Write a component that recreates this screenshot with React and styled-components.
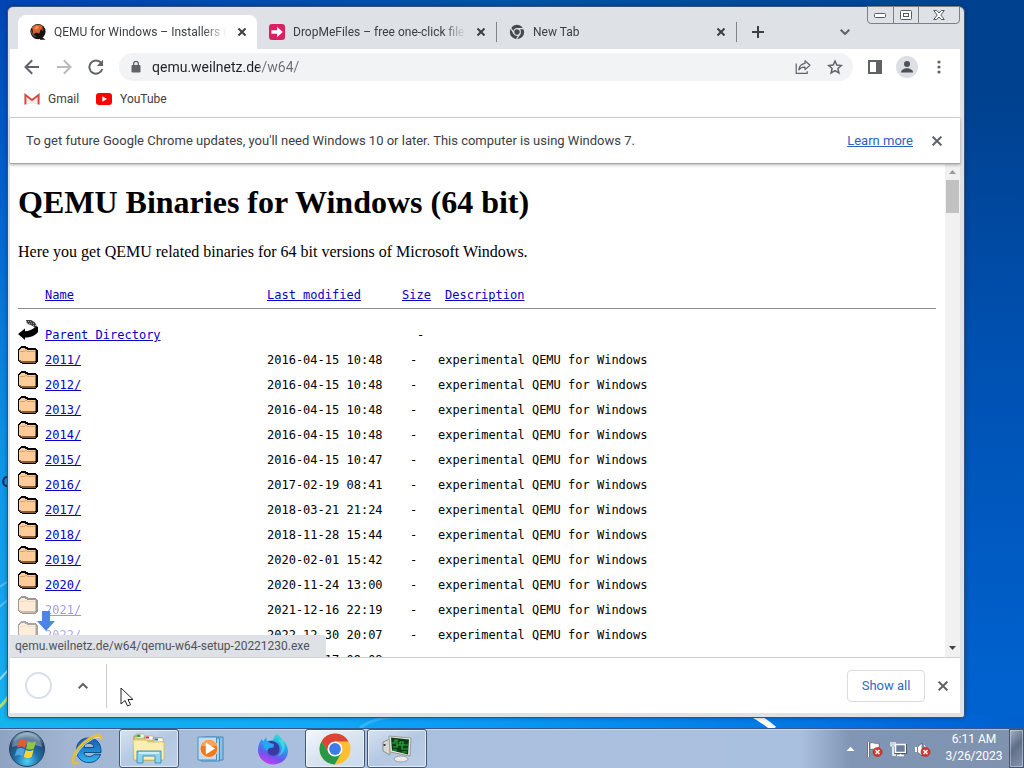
import React from 'react'
import styled, { createGlobalStyle } from 'styled-components'

const uiFont = 'Roboto, "Open Sans", sans-serif'
const monoFont = '"DejaVu Sans Mono", "Liberation Mono", monospace'
const serifFont = '"Liberation Serif", "Times New Roman", serif'
const iconColor = '#5f6368'
const textColor = '#3c4043'
const linkColor = '#0a00c4'

const GlobalStyle = createGlobalStyle`
    * { box-sizing: border-box; }
    body { margin: 0; overflow: hidden; font-family: ${uiFont}; font-size: 12px; color: ${textColor}; }
    button { font: inherit; color: inherit; border: 0; padding: 0; background: none; }
    svg { display: block; flex: none; }
`

const Desktop = styled.div`
    position: relative;
    display: flex;
    flex-direction: column;
    height: 100vh;
    background:
        linear-gradient(90deg, #14b4ee 0%, #10aaf8 30%, #058cf0 60%, #0168dc 90%, #0060cc 100%) bottom / 100% 54px no-repeat,
        linear-gradient(180deg, #00418f 0%, #00418f 12%, #0050b0 45%, #0062cf 90%) right / 64px 100% no-repeat,
        linear-gradient(90deg, #0145b4 0%, #0354a6 50%, #00418f 100%) top / 100% 10px no-repeat,
        linear-gradient(180deg, #0145b4 0%, #0060d0 25%, #0c96e8 60%, #18b8f0 100%);
`

const Wallpaper = styled.svg`
    position: absolute;
    left: 0;
    bottom: 40px;
`

const Window = styled.section`
    position: relative;
    flex: 1;
    min-height: 0;
    display: flex;
    flex-direction: column;
    margin: 6px 59px 10px 7px;
    padding: 0 4px 4px 2px;
    border: 1px solid #3b5274;
    border-radius: 6px 6px 3px 3px;
    background: #dee1e6;
    box-shadow: 0 0 4px rgba(0, 20, 60, 0.4);
`

const TabStrip = styled.header`
    position: relative;
    display: flex;
    align-items: flex-end;
    height: 42px;
    padding-left: 8px;
`

const Tab = styled.div`
    display: flex;
    align-items: center;
    width: 239px;
    height: 34px;
    padding: 0 7px 0 12px;
    border-radius: 8px 8px 0 0;
    background: ${p => (p.$active ? '#fff' : 'transparent')};
`

const TabTitle = styled.span`
    flex: 1;
    min-width: 0;
    margin: 0 7px 0 8px;
    overflow: hidden;
    white-space: nowrap;
    mask-image: linear-gradient(90deg, #000 calc(100% - 24px), transparent);
`

const TabDivider = styled.i`
    width: 1px;
    height: 20px;
    margin-bottom: 7px;
    background: #808388;
`

const IconButton = styled.button`
    display: flex;
    align-items: center;
    justify-content: center;
    flex: none;
    width: ${p => p.$size || 32}px;
    height: ${p => p.$size || 32}px;
    color: ${p => p.$color || iconColor};
`

const TabSearch = styled(IconButton)`
    margin: 0 99px 1px auto;
`

const NewTab = styled(IconButton)`
    margin: 0 0 1px 5px;
`

const WindowButtons = styled.div`
    position: absolute;
    top: -1px;
    right: 0;
    display: flex;
    border: 1px solid #7b7f88;
    border-radius: 0 0 4px 4px;
`

const WindowButton = styled.button`
    display: flex;
    align-items: center;
    justify-content: center;
    width: ${p => (p.$wide ? 41 : 25)}px;
    height: 16px;
    & + & { border-left: 1px solid #7b7f88; }
`

const Toolbar = styled.nav`
    display: flex;
    align-items: center;
    height: 36px;
    padding: 0 5px 0 6px;
    background: #fff;
`

const Omnibox = styled.form`
    flex: 1;
    display: flex;
    align-items: center;
    height: 28px;
    margin: 0 6px 0 7px;
    padding: 0 2px 0 11px;
    border-radius: 14px;
    background: #f1f3f4;
`

/* host part is darker than the path */
const Address = styled.input`
    flex: 1;
    min-width: 0;
    margin-left: 10px;
    padding: 0;
    border: 0;
    outline: 0;
    font: 14px ${uiFont};
    line-height: 20px;
    color: #202124;
    background: linear-gradient(90deg, #202124 107px, #6a6e73 107px);
    background-clip: text;
    -webkit-text-fill-color: transparent;
`

const Avatar = styled.span`
    display: flex;
    align-items: center;
    justify-content: center;
    width: 22px;
    height: 22px;
    border-radius: 50%;
    background: #dcdfe4;
`

const Bookmarks = styled.div`
    display: flex;
    align-items: center;
    gap: 17px;
    height: 33px;
    padding: 0 14px 5px;
    border-bottom: 1px solid #d5d7da;
    background: #fff;
`

const Bookmark = styled.a`
    display: flex;
    align-items: center;
    gap: 8px;
    color: inherit;
    text-decoration: none;
`

const InfoBar = styled.div`
    position: relative;
    z-index: 1;
    display: flex;
    align-items: center;
    height: 46px;
    padding: 0 11px 0 16px;
    border-bottom: 1px solid #a6a6a6;
    background: #fff;
    box-shadow: 0 1px 3px rgba(0, 0, 0, 0.3);
    font-size: 13px;
`

const InfoText = styled.p`
    flex: 1;
    margin: 0;
`

const InfoLink = styled.a`
    margin-right: 12px;
    color: #2b62c4;
`

const Viewport = styled.div`
    position: relative;
    flex: 1;
    min-height: 0;
    display: flex;
    overflow: hidden;
    background: #fff;
`

const Page = styled.main`
    flex: 1;
    padding: 20px 9px 0 8px;
    color: #000;
    font: 16px ${serifFont};
`

const Heading = styled.h1`
    margin: 0 0 22px;
    font-size: 32px;
    line-height: 37px;
`

const Intro = styled.p`
    margin: 0 0 16px;
    line-height: 18px;
`

const Listing = styled.table`
    width: 100%;
    table-layout: fixed;
    border-spacing: 0;
    font: 12px ${monoFont};
    line-height: 16px;
    white-space: pre;
    tbody::before { content: ''; display: block; height: 10px; }
    a { color: ${linkColor}; }
`

const HeadCell = styled.th`
    width: ${p => (p.$width ? p.$width + 'px' : 'auto')};
    padding: 10px 0 5px ${p => p.$indent || 0}px;
    border-bottom: 1px solid #8c8c8c;
    font-weight: 400;
    text-align: left;
`

const Cell = styled.td`
    padding: 8px 0 1px ${p => p.$indent || 0}px;
    opacity: ${p => p.$opacity || 1};
`

const IconCell = styled.td`
    padding: 1px 0 4px;
    opacity: ${p => p.$opacity || 1};
`

const ScrollTrack = styled.div`
    display: flex;
    flex-direction: column;
    justify-content: space-between;
    align-items: center;
    width: 15px;
    background: #f1f1f1;
`

const ScrollTop = styled.div`
    display: flex;
    flex-direction: column;
    align-items: center;
`

const ScrollThumb = styled.div`
    width: 13px;
    height: 33px;
    background: #c1c1c1;
`

const StatusBubble = styled.div`
    position: absolute;
    left: 0;
    bottom: 0;
    width: 316px;
    height: 22px;
    padding-left: 5px;
    border-top-right-radius: 3px;
    line-height: 22px;
    background: #dee1e6;
    color: #50545a;
`

const DownloadArrow = styled.svg`
    position: absolute;
    left: 27px;
    bottom: 26px;
`

const Shelf = styled.footer`
    display: flex;
    align-items: center;
    height: 56px;
    padding-right: 1px;
    border-top: 1px solid #cfd1d4;
    background: #fff;
`

const Progress = styled.div`
    width: 27px;
    height: 27px;
    margin: 0 15px;
    border: 2px solid #d8dfe8;
    border-radius: 50%;
`

const ShelfDivider = styled.i`
    width: 1px;
    height: 44px;
    margin: 0 auto 0 7px;
    background: #c9cbcf;
`

const ShowAll = styled.button`
    width: 78px;
    height: 32px;
    margin-right: 2px;
    border: 1px solid #dadce0;
    border-radius: 4px;
    font-size: 13px;
    color: #3367c8;
`

const Cursor = styled.svg`
    position: absolute;
    left: 112px;
    bottom: 9px;
`

const Taskbar = styled.footer`
    position: relative;
    display: flex;
    gap: 2px;
    height: 40px;
    border-top: 1px solid #35598a;
    background: linear-gradient(90deg, #8ea3c2 0, #a2b6d3 70px, #a9bfdd 260px, #a9c0de 800px, #8196b4 850px, #7f93b0 100%);
    box-shadow: inset 0 1px 0 rgba(255, 255, 255, 0.4);
`

const StartButton = styled.button`
    display: flex;
    align-items: center;
    width: 55px;
    padding-left: 8px;
`

const TaskButton = styled.button`
    display: flex;
    align-items: center;
    justify-content: center;
    width: 60px;
    height: 39px;
    border: 1px solid ${p => (p.$open ? '#3f5878' : 'transparent')};
    border-radius: 3px;
    background: ${p => {
        if (p.$active) return 'linear-gradient(150deg, #f2f7fb, #d4e0ee 60%, #cbdcf0)'
        return p.$open ? 'linear-gradient(150deg, #d6e2f1, #b4c8e2 50%, #bccfe8)' : 'none'
    }};
    box-shadow: ${p => (p.$open ? 'inset 0 0 0 1px rgba(255, 255, 255, 0.6)' : 'none')};
`

const Tray = styled.div`
    display: flex;
    align-items: center;
    margin-left: auto;
`

const TrayIcons = styled.div`
    display: flex;
    align-items: center;
    gap: 7px;
    padding: 2px 8px 0 11px;
`

const Clock = styled.time`
    width: 70px;
    padding-bottom: 1px;
    color: #fff;
    line-height: 17px;
    text-align: center;
`

const ShowDesktop = styled.button`
    align-self: stretch;
    width: 15px;
    border: 1px solid #46566e;
    background: linear-gradient(135deg, #a4b0c2, #5f6f88 45%, #8796ac);
    box-shadow: inset 0 0 0 1px rgba(255, 255, 255, 0.35);
`

const CloseIcon = ({ size = 8, width = 2 }) => (
    <svg width={size} height={size} viewBox="0 0 8 8" stroke="currentColor" strokeWidth={width * 8 / size}>
        <path d="M.5 .5 7.5 7.5M7.5 .5 .5 7.5" />
    </svg>
)

const ChevronIcon = ({ up }) => (
    <svg width="10" height="6" viewBox="0 0 10 6" fill="none" stroke="currentColor" strokeWidth="2">
        <path d={up ? 'M.7 5.3 5 1l4.3 4.3' : 'M.7 .7 5 5 9.3 .7'} />
    </svg>
)

const QemuIcon = () => (
    <svg width="16" height="16" viewBox="0 0 16 16">
        <circle cx="8" cy="7.6" r="7.6" fill="#17120f" />
        <path d="M10 11.5l5.5 4.3H10z" fill="#17120f" />
        <path d="M2 3.5C4 .8 8.5-.2 12 1.8l1 3.4-2.5.5-1.2 3.8-3-1-2.8 1.8z" fill="#d8622c" />
        <path d="M4 4l3-2.5L9 3 7 6z" fill="#f19152" />
        <path d="M1 6l3 5 3 2-3-.5C2 11 .6 9 1 6z" fill="#6b5c54" />
        <path d="M12 3l2 3-2 1z" fill="#7a3c20" />
    </svg>
)

const DropIcon = () => (
    <svg width="16" height="16" viewBox="0 0 16 16">
        <rect width="16" height="16" rx="3" fill="#db1f63" />
        <path d="M8 2.8 13.8 8 8 13.2V9.8H2.4V6.2H8z" fill="#fff" />
    </svg>
)

const ChromeMonoIcon = () => (
    <svg width="16" height="16" viewBox="0 0 16 16">
        <circle cx="8" cy="8" r="7.2" fill="#454a50" />
        <circle cx="8" cy="8" r="3.3" fill="none" stroke="#dee1e6" strokeWidth="1.2" />
        <path d="M8 4.7h6.8M5.1 9.6 1.7 3.9M10.9 9.6 7.4 15.5" stroke="#dee1e6" strokeWidth="1.2" />
        <circle cx="8" cy="8" r="2.1" fill="#454a50" />
    </svg>
)

const BackIcon = () => (
    <svg width="16" height="16" viewBox="0 0 16 16" fill="none" stroke="currentColor" strokeWidth="2">
        <path d="M15 8H2M8.2 1.3 1.5 8l6.7 6.7" />
    </svg>
)

const ForwardIcon = () => (
    <svg width="16" height="16" viewBox="0 0 16 16" fill="none" stroke="currentColor" strokeWidth="2">
        <path d="M1 8h13M7.8 1.3 14.5 8l-6.7 6.7" />
    </svg>
)

const ReloadIcon = () => (
    <svg width="16" height="16" viewBox="0 0 16 16">
        <path d="M13.1 3.9A6.6 6.6 0 1 0 14.3 10" fill="none" stroke="currentColor" strokeWidth="2" />
        <path d="M15 .8V7H8.8z" fill="currentColor" />
    </svg>
)

const LockIcon = () => (
    <svg width="12" height="14" viewBox="0 0 12 14">
        <rect x="1.5" y="5" width="9" height="7.5" rx="1" fill={iconColor} />
        <path d="M3.7 5.5V3.6a2.3 2.3 0 0 1 4.6 0v1.9" fill="none" stroke={iconColor} strokeWidth="1.3" />
    </svg>
)

const ShareIcon = () => (
    <svg width="16" height="16" viewBox="0 0 16 16" fill="none" stroke="currentColor" strokeWidth="1.2">
        <path d="M1.2 4.5v9.9h11v-2.2" />
        <path d="M10 1.8 15 6.3l-5 4.3V8.1C7 8 5 9 3.8 10.8 4.3 7.2 6.5 4.9 10 4.4z" strokeLinejoin="round" />
    </svg>
)

const StarIcon = () => (
    <svg width="16" height="16" viewBox="0 0 16 16" fill="none" stroke="currentColor" strokeWidth="1.5">
        <path d="M8 2l1.8 4.1 4.5.4-3.4 3 1 4.4L8 11.6l-3.9 2.3 1-4.4-3.4-3 4.5-.4z" />
    </svg>
)

const PanelIcon = () => (
    <svg width="14" height="14" viewBox="0 0 14 14">
        <path d="M0 0h14v14H0zM2 2v10h6V2z" fill="currentColor" fillRule="evenodd" />
    </svg>
)

const PersonIcon = () => (
    <svg width="14" height="14" viewBox="0 0 14 14" fill="#4d5257">
        <circle cx="7" cy="4" r="3" />
        <path d="M1 12.5c0-2.6 3-4.2 6-4.2s6 1.6 6 4.2z" />
    </svg>
)

const MenuIcon = () => (
    <svg width="4" height="14" viewBox="0 0 4 14" fill="currentColor">
        <circle cx="2" cy="2" r="1.6" />
        <circle cx="2" cy="7" r="1.6" />
        <circle cx="2" cy="12" r="1.6" />
    </svg>
)

const GmailIcon = () => (
    <svg width="16" height="12" viewBox="0 0 16 12">
        <path d="M2 2v9h12V2L8 7z" fill="#f3eeee" />
        <path d="M1.4 11.5V2L8 7l6.6-5v9.5" fill="none" stroke="#d54b3f" strokeWidth="2" />
    </svg>
)

const YouTubeIcon = () => (
    <svg width="16" height="12" viewBox="0 0 16 12">
        <rect width="16" height="12" rx="3" fill="#f00" />
        <path d="M6.3 3.3 11 6l-4.7 2.7z" fill="#fff" />
    </svg>
)

const FolderIcon = () => (
    <svg width="20" height="20" viewBox="0 0 20 20" shapeRendering="crispEdges">
        <path d="M2 2h1V1h5v1h2v1h8v1h1v1h1v12h-1v1h-1v1H4v-1H2v-1H1v-1H0V4h1V3h1z" fill="#000" />
        <path d="M1 5h16v12h1v1H4v-1H2v-1H1z" fill="#8a5a2c" />
        <path d="M2 4h1V3h4v1h2v1h8v11H3v-1H1V5h1z" fill="#fc9" />
        <path d="M2 6.5h5M7 5.5h2M9 6.500h8" stroke="#d6a26c" />
        <path d="M17.500 5v11" stroke="#a36c38" />
    </svg>
)

const ParentIcon = () => (
    <svg width="20" height="20" viewBox="0 0 20 20">
        <path d="M0 14l7-5.500v2.800c5-.6 9-2.300 11-5.300l2 1v5c-3 4-7.500 5.500-13 5.500V20z" fill="#000" />
        <path d="M8 0h5l4 2.500 2 4-2 1.500c-2-2.500-5-3.500-8-4z" fill="#3a3a3a" />
        <path d="M8 1.500h6M9 3.500h8M13 5.500h5" stroke="#aaa" strokeDasharray="1 1" fill="none" />
    </svg>
)

const StartOrb = () => (
    <svg width="38" height="38" viewBox="0 0 38 38">
        <defs>
            <radialGradient id="orb" cx=".5" cy=".85" r=".85">
                <stop offset="0" stopColor="#4fd0f4" />
                <stop offset=".4" stopColor="#1f6fa8" />
                <stop offset=".75" stopColor="#22496f" />
                <stop offset="1" stopColor="#8fb3cc" />
            </radialGradient>
        </defs>
        <circle cx="19" cy="19" r="17.5" fill="url(#orb)" stroke="#27425f" />
        <path d="M4 17C5 8 11 3 19 3s14 5 15 14c-8-3-22-3-30 0z" fill="#fff" opacity=".3" />
        <path d="M11 11c3-2 5-2 8 0l-2 7c-3-2-5-2-8 0z" fill="#e8592b" />
        <path d="M20 11.5c3 1.5 5 1.5 8-.5l-2 7.5c-3 1.5-5 1.5-8 0z" fill="#93c83e" />
        <path d="M8.7 19.5c3-2 5-2 8 0l-2 7c-3-2-5-2-8 0z" fill="#4ea6e0" />
        <path d="M17.7 20c3 1.5 5 1.5 8-.5l-2 7.5c-3 1.5-5 1.5-8 0z" fill="#fbd33b" />
    </svg>
)

const ExplorerEIcon = () => (
    <svg width="34" height="34" viewBox="0 0 34 34">
        <defs>
            <linearGradient id="ie" x1="0" y1="0" x2="0" y2="1">
                <stop offset="0" stopColor="#1a5fae" />
                <stop offset=".5" stopColor="#1c86cf" />
                <stop offset="1" stopColor="#38b8ee" />
            </linearGradient>
        </defs>
        <path d="M31 20.500H14c.4 2.700 2.500 4 5.200 4 2.200 0 3.800-.8 4.800-2.200h6.500C29 27.500 24.800 30.500 19 30.500 11.500 30.500 6.500 25.500 6.500 18S11.500 6 19 6s12.500 5.500 12 14.500zM14 15.500h10c-.4-2.700-2.300-4.300-5-4.300s-4.600 1.600-5 4.300z" fill="url(#ie)" stroke="#0f4c8c" strokeWidth="1" />
        <path d="M31 8c1-4-1-6-6-4C16 7 6 17 3.5 25c-1.500 5 0 8 5 5.500" fill="none" stroke="#e9bf36" strokeWidth="2.5" />
        <path d="M30 6.5C28 2 12 12 6 23" fill="none" stroke="#fbe99a" strokeWidth="1" />
    </svg>
)

const LibraryIcon = () => (
    <svg width="34" height="32" viewBox="0 0 34 32">
        <path d="M2 3h8l2 2h18v22H2z" fill="#e9cf77" stroke="#b8963d" />
        <path d="M4 1h8v4H4zM13 3h8v4h-8zM22 5h9v4h-9z" fill="#fff" stroke="#a9a079" strokeWidth=".6" />
        <path d="M4.5 1.5h4v2.5h-4z" fill="#39a83c" />
        <path d="M13.5 3.5h3.5v2h-3.500z" fill="#d5382b" />
        <path d="M22.5 5.5h3.5v2h-3.500z" fill="#2f79c6" />
        <path d="M1 7h13l2 2h16v18H2z" fill="#fbeeb0" stroke="#d3b860" strokeWidth=".8" />
        <path d="M5 30V18h24v12h-6v-7H11v7z" fill="#8ed2ee" stroke="#3f92bf" strokeWidth="1" />
        <path d="M7 20h20" stroke="#dff4fc" strokeWidth="1.5" />
    </svg>
)

const MediaIcon = () => (
    <svg width="30" height="28" viewBox="0 0 30 28">
        <path d="M8 2h19v23H8z" fill="#8fc1e4" stroke="#3f86b9" />
        <path d="M5 3h18.5v23H5z" fill="#a9d3ee" stroke="#3f86b9" />
        <path d="M2 2h18.5v23H2z" fill="#c0dcf0" stroke="#4a90c2" />
        <circle cx="13" cy="13.5" r="9" fill="#ee7a1d" stroke="#f8d9bd" strokeWidth="1" />
        <path d="M5 11a8.5 8.5 0 0 1 16 0z" fill="#f7a45c" />
        <path d="M9.8 7.5 19 13.5l-9.2 6z" fill="#fff" />
    </svg>
)

const FirefoxIcon = () => (
    <svg width="32" height="32" viewBox="0 0 32 32">
        <defs>
            <linearGradient id="fox" x1=".7" y1="0" x2=".3" y2="1">
                <stop offset="0" stopColor="#30e6cf" />
                <stop offset=".35" stopColor="#1fa4f5" />
                <stop offset=".7" stopColor="#6b57ee" />
                <stop offset="1" stopColor="#d43af0" />
            </linearGradient>
        </defs>
        <path d="M20 1c3 2 4 4 5 6 3 2 6 6 6 11 0 8-7 13.500-15 13.500S1 25 1 17C1 12 3 8 5 6l1 3 3-5 1 4 6-1c1-3 2-5 4-6z" fill="url(#fox)" />
        <path d="M10 9c4-2 8-1 11 2 2 3 2 8 0 10-4 3-8 2-10-1-1-3 0-5 3-5l3-1-2-3h-5z" fill="#3b3a9f" />
        <path d="M5 9c2-2 6-1 8 1l4 1-1 3-4 1-2 3c-3-2-4-5-4-9z" fill="#25a9ee" />
        <path d="M21 7c5 5 5 12 0 16 7-2 9-11 4-16z" fill="#4be7d8" opacity=".65" />
    </svg>
)

const ChromeIcon = () => (
    <svg width="32" height="32" viewBox="0 0 32 32">
        <circle cx="16" cy="16" r="15.5" fill="#fbc02d" />
        <path d="M16 8.5h13.5A15.5 15.5 0 0 0 2.6 8.2L9.5 19.8 16 8.5z" fill="#db4437" />
        <path d="M22.5 19.8 15.7 31.5A15.5 15.5 0 0 1 2.6 8.2l6.9 11.6z" fill="#279847" />
        <circle cx="16" cy="16" r="7.5" fill="#fff" />
        <circle cx="16" cy="16" r="5.9" fill="#3d7de9" />
    </svg>
)

const MonitorIcon = () => (
    <svg width="32" height="30" viewBox="0 0 32 30">
        <path d="M2 8l7-3v16l-7-4z" fill="#d8d9d2" stroke="#8f9088" />
        <path d="M3.5 10v2" stroke="#3b3b3b" strokeWidth="2" />
        <ellipse cx="20" cy="25" rx="7" ry="3" fill="#e6e8ea" stroke="#9ea3a8" />
        <path d="M8 2l22 2-1 18-20-4z" fill="#e4e6e0" stroke="#9b9d97" />
        <path d="M10 3.500l18 2-1 15-16-4z" fill="#0b3f19" />
        <path d="M11 9h3V6h2v5h3V8h3v3h5M12 13h4v-2h5v4h6M12 16h4M21 18h5" fill="none" stroke="#2fae3c" strokeWidth="1.2" />
    </svg>
)

const RedCross = () => (
    <g>
        <circle cx="11.5" cy="11" r="4.5" fill="#d8392e" stroke="#a3221b" strokeWidth=".6" />
        <path d="M9.500 9l4 4M13.500 9l-4 4" stroke="#fff" strokeWidth="1.5" />
    </g>
)

const FlagIcon = () => (
    <svg width="17" height="17" viewBox="0 0 17 17">
        <path d="M2.5 1v15" stroke="#333" strokeWidth="2.4" />
        <path d="M2.5 1v15" stroke="#fff" strokeWidth="1.4" />
        <path d="M4 2c3-1 4 1 9 .3v6C9 9 7 7.5 4 8.5z" fill="#fff" stroke="#4b5362" strokeWidth=".6" />
        <RedCross />
    </svg>
)

const NetworkIcon = () => (
    <svg width="17" height="17" viewBox="0 0 17 17">
        <rect x="5.5" y="3.5" width="10" height="8" fill="#6b7f9c" stroke="#fff" strokeWidth="1.5" />
        <path d="M7 14.5h7M10.5 12v2M3 6v8h3" fill="none" stroke="#fff" strokeWidth="1.5" />
        <path d="M1 1v4h4V1M3 1v3" fill="none" stroke="#fff" strokeWidth="1.2" />
        <path d="M4.5 12.5h12V3" fill="none" stroke="#27303f" strokeWidth=".7" />
    </svg>
)

const SpeakerIcon = () => (
    <svg width="17" height="17" viewBox="0 0 17 17">
        <path d="M1 6h2v5H1z" fill="#fff" />
        <path d="M3.5 6 8 2v13l-4.500-4z" fill="#fff" stroke="#3f4a5c" strokeWidth=".6" />
        <path d="M10 4c2 2 2 6 0 8" fill="none" stroke="#fff" />
        <RedCross />
    </svg>
)

const tabs = [
    { title: 'QEMU for Windows – Installers (64 bit)', icon: QemuIcon, active: true },
    { title: 'DropMeFiles – free one-click file sharing', icon: DropIcon, divider: true },
    { title: 'New Tab', icon: ChromeMonoIcon, divider: true },
]

const folders = [
    ['2011/', '2016-04-15 10:48'],
    ['2012/', '2016-04-15 10:48'],
    ['2013/', '2016-04-15 10:48'],
    ['2014/', '2016-04-15 10:48'],
    ['2015/', '2016-04-15 10:47'],
    ['2016/', '2017-02-19 08:41'],
    ['2017/', '2018-03-21 21:24'],
    ['2018/', '2018-11-28 15:44'],
    ['2019/', '2020-02-01 15:42'],
    ['2020/', '2020-11-24 13:00'],
    ['2021/', '2021-12-16 22:19', 0.4],
    ['2022/', '2022-12-30 20:07', 0.35],
]

const tasks = [
    { name: 'Internet Explorer', icon: ExplorerEIcon },
    { name: 'Windows Explorer', icon: LibraryIcon, open: true },
    { name: 'Windows Media Player', icon: MediaIcon },
    { name: 'Firefox', icon: FirefoxIcon },
    { name: 'Google Chrome', icon: ChromeIcon, open: true, active: true },
    { name: 'Task Manager', icon: MonitorIcon, open: true },
]

function Tabs() {
    return <TabStrip>
        {tabs.map(({ title, icon: Icon, active, divider }) => (
            <React.Fragment key={title}>
                <Tab $active={active}>
                    <Icon />
                    <TabTitle>{title}</TabTitle>
                    <IconButton $size={16} $color="#3c4043" aria-label="Close tab"><CloseIcon /></IconButton>
                </Tab>
                {divider && <TabDivider />}
            </React.Fragment>
        ))}
        <NewTab $color="#3c4043" aria-label="New tab">
            <svg width="12" height="12" viewBox="0 0 12 12" stroke="currentColor" strokeWidth="2"><path d="M6 0v12M0 6h12" /></svg>
        </NewTab>
        <TabSearch aria-label="Search tabs"><ChevronIcon /></TabSearch>
        <WindowButtons>
            <WindowButton aria-label="Minimize">
                <svg width="13" height="5" viewBox="0 0 13 5"><rect x=".5" y=".5" width="11" height="4" rx="1" fill="#fff" stroke="#555a66" /></svg>
            </WindowButton>
            <WindowButton aria-label="Restore">
                <svg width="12" height="10" viewBox="0 0 12 10" fill="#fff" stroke="#555a66"><rect x=".5" y=".5" width="11" height="9" rx="1" /><rect x="3.5" y="3.5" width="5" height="3" /></svg>
            </WindowButton>
            <WindowButton $wide aria-label="Close">
                <svg width="12" height="10" viewBox="0 0 12 10" fill="#fff" stroke="#555a66"><path d="M.7 .5h3L6 3 8.3 .5h3L7.8 5l3.5 4.5h-3L6 7 3.7 9.5h-3L4.2 5z" /></svg>
            </WindowButton>
        </WindowButtons>
    </TabStrip>
}

function NavBar() {
    return <Toolbar>
        <IconButton aria-label="Back"><BackIcon /></IconButton>
        <IconButton $color="#b9bbbe" aria-label="Forward"><ForwardIcon /></IconButton>
        <IconButton aria-label="Reload"><ReloadIcon /></IconButton>
        <Omnibox>
            <LockIcon />
            <Address aria-label="Address" defaultValue="qemu.weilnetz.de/w64/" />
            <IconButton type="button" aria-label="Share"><ShareIcon /></IconButton>
            <IconButton type="button" aria-label="Bookmark"><StarIcon /></IconButton>
        </Omnibox>
        <IconButton aria-label="Side panel"><PanelIcon /></IconButton>
        <IconButton aria-label="Profile"><Avatar><PersonIcon /></Avatar></IconButton>
        <IconButton aria-label="Menu"><MenuIcon /></IconButton>
    </Toolbar>
}

function DirectoryListing() {
    return <Listing>
        <thead>
            <tr>
                <HeadCell $width={27} />
                <HeadCell $width={222}><a href="#name">Name</a></HeadCell>
                <HeadCell $width={135}><a href="#modified">Last modified</a></HeadCell>
                <HeadCell $width={36}><a href="#size">Size</a></HeadCell>
                <HeadCell $indent={7}><a href="#description">Description</a></HeadCell>
            </tr>
        </thead>
        <tbody>
            <tr>
                <IconCell><ParentIcon /></IconCell>
                <Cell><a href="#parent">Parent Directory</a></Cell>
                <Cell />
                <Cell $indent={15}>-</Cell>
                <Cell />
            </tr>
            {folders.map(([name, date, opacity]) => (
                <tr key={name}>
                    <IconCell $opacity={opacity}><FolderIcon /></IconCell>
                    <Cell $opacity={opacity}><a href={'#' + name}>{name}</a></Cell>
                    <Cell>{date}</Cell>
                    <Cell $indent={8}>-</Cell>
                    <Cell>experimental QEMU for Windows</Cell>
                </tr>
            ))}
            <tr>
                <Cell />
                <Cell />
                <Cell>2022-12-17 09:08</Cell>
                <Cell />
                <Cell />
            </tr>
        </tbody>
    </Listing>
}

export default function App() {
    return <Desktop>
        <GlobalStyle />
        <Wallpaper width="1024" height="300" viewBox="0 0 1024 300" fill="none">
            <path d="M-2 160 10 152M-2 180 10 170" stroke="#7fd0f6" strokeWidth="2" opacity=".6" />
            <path d="M-1 252 10 240" stroke="#bfeefc" strokeWidth="2" opacity=".7" />
            <path d="M-2 280C4 276 8 270 12 262" stroke="#a5e07e" strokeWidth="3" />
            <path d="M360 300c8-7 24-11 40-12" stroke="#6cd0fb" strokeWidth="3" opacity=".4" />
            <path d="M752 286c8 4 15 9 22 15" stroke="#fff" strokeWidth="6" />
            <path d="M7 49c-5 0-5 9 0 9" stroke="#152a48" strokeWidth="2" />
        </Wallpaper>
        <Window>
            <Tabs />
            <NavBar />
            <Bookmarks>
                <Bookmark href="#gmail"><GmailIcon />Gmail</Bookmark>
                <Bookmark href="#youtube"><YouTubeIcon />YouTube</Bookmark>
            </Bookmarks>
            <InfoBar>
                <InfoText>To get future Google Chrome updates, you'll need Windows 10 or later. This computer is using Windows 7.</InfoText>
                <InfoLink href="#learn">Learn more</InfoLink>
                <IconButton $size={24} aria-label="Dismiss"><CloseIcon size={10} /></IconButton>
            </InfoBar>
            <Viewport>
                <Page>
                    <Heading>QEMU Binaries for Windows (64 bit)</Heading>
                    <Intro>Here you get QEMU related binaries for 64 bit versions of Microsoft Windows.</Intro>
                    <DirectoryListing />
                </Page>
                <ScrollTrack>
                    <ScrollTop>
                        <svg width="15" height="16" viewBox="0 0 15 16"><path d="M4 10l3.5-4L11 10z" fill="#9a9a9a" /></svg>
                        <ScrollThumb />
                    </ScrollTop>
                    <svg width="15" height="16" viewBox="0 0 15 16"><path d="M4 5l3.5 4L11 5z" fill="#444" /></svg>
                </ScrollTrack>
                <DownloadArrow width="18" height="20" viewBox="0 0 18 20"><path d="M5 0h8v10h5l-9 10-9-10h5z" fill="#4a86e8" /></DownloadArrow>
                <StatusBubble>qemu.weilnetz.de/w64/qemu-w64-setup-20221230.exe</StatusBubble>
            </Viewport>
            <Shelf>
                <Progress />
                <IconButton aria-label="Download options"><ChevronIcon up /></IconButton>
                <ShelfDivider />
                <ShowAll>Show all</ShowAll>
                <IconButton aria-label="Close downloads bar"><CloseIcon size={10} /></IconButton>
            </Shelf>
            <Cursor width="14" height="21" viewBox="0 0 14 21">
                <path d="M1 1v16l4-3.5 2.5 5.5 3-1.3L8 12.5h5z" fill="#fff" stroke="#222" />
            </Cursor>
        </Window>
        <Taskbar>
            <StartButton aria-label="Start"><StartOrb /></StartButton>
            {tasks.map(({ name, icon: Icon, open, active }) => (
                <TaskButton key={name} aria-label={name} $open={open} $active={active}><Icon /></TaskButton>
            ))}
            <Tray>
                <svg width="9" height="6" viewBox="0 0 9 6"><path d="M.5 5 4.5 .8 8.5 5z" fill="#fff" /></svg>
                <TrayIcons>
                    <FlagIcon />
                    <NetworkIcon />
                    <SpeakerIcon />
                </TrayIcons>
                <Clock>6:11 AM<br />3/26/2023</Clock>
                <ShowDesktop aria-label="Show desktop" />
            </Tray>
        </Taskbar>
    </Desktop>
}
